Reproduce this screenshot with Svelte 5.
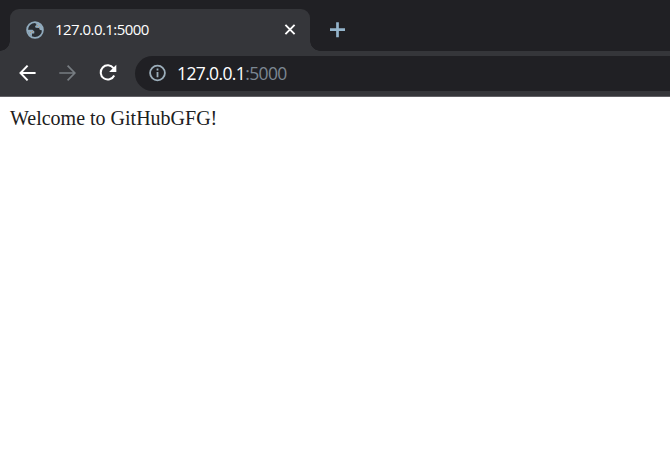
<script>
  const host = '127.0.0.1';
  const port = ':5000';
</script>

<div class="browser">
  <header class="tabs">
    <div class="tab">
      <svg class="globe" width="20" height="20" viewBox="0 0 20 20">
        <circle cx="10" cy="10" r="7.9" fill="#292d32" stroke="#91abbd" stroke-width="1.8" />
        <path d="M10.2 3.2 L14 3 L17 7 L17 10.6 L14.7 9.8 L14.1 7.9 L10.6 7.8 L10 5.9 L11.7 5 Z" fill="#91abbd" />
        <path d="M2.4 9.8 L7.5 9.8 L9.4 11.5 L9.2 13.4 L7.1 13.6 L6.8 16.6 L3.8 14.4 Z" fill="#91abbd" />
        <path d="M12 5h1v1h-1zM14 7h1v1h-1zM5 12h1v1H5zM7 11h1v1H7z" fill="#b69370" />
      </svg>
      <span class="title">{host}{port}</span>
      <svg class="close" width="12" height="12" viewBox="0 0 12 12">
        <path d="M1.4 .9 L10.6 10.1 M10.6 .9 L1.4 10.1" stroke="#fff" stroke-width="1.9" />
      </svg>
    </div>
    <svg class="plus" width="16" height="16" viewBox="0 0 16 16">
      <path d="M8.5 .2v15M1 7.7h15" stroke="#94b4cb" stroke-width="2.7" />
    </svg>
  </header>
  <nav>
    <svg width="18" height="18" viewBox="0 0 18 18" fill="none" stroke="#fff" stroke-width="2">
      <path d="M16.6 9H2M8.6 1.6 L1.5 9 L8.6 16.4" />
    </svg>
    <svg width="18" height="18" viewBox="0 0 18 18" fill="none" stroke="#777d82" stroke-width="1.7">
      <path d="M.3 9h15M8.6 1.6 L15.8 9 L8.6 16.4" />
    </svg>
    <svg width="18" height="18" viewBox="0 0 18 18">
      <path d="M14.5 4.2 A7.1 7.1 0 1 0 15.2 11.5" fill="none" stroke="#fff" stroke-width="2" />
      <path d="M17.3 .7v7.2h-7.2z" fill="#fff" />
    </svg>
    <div class="address">
      <svg width="18" height="18" viewBox="0 0 18 18">
        <circle cx="8.5" cy="9" r="7.4" fill="none" stroke="#9caebb" stroke-width="1.8" />
        <path d="M8.5 4.6v1.9M8.5 8v5.2" stroke="#9caebb" stroke-width="1.8" />
      </svg>
      <span class="url">{host}<span class="port">{port}</span></span>
    </div>
  </nav>
  <main>Welcome to GitHubGFG!</main>
</div>

<style>
  :global(body) { margin: 0; background: #fff; }
  .browser { height: 457px; overflow: hidden; }
  svg { display: block; flex: none; }
  .tabs {
    display: flex;
    height: 51px;
    box-sizing: border-box;
    padding: 9px 0 0 10px;
    background: #202024;
  }
  .tab {
    position: relative;
    display: flex;
    align-items: center;
    width: 300px;
    height: 42px;
    box-sizing: border-box;
    padding: 0 14px 0 15px;
    border-radius: 9px 9px 0 0;
    background: #35363a;
  }
  .tab::before, .tab::after {
    content: '';
    position: absolute;
    bottom: 0;
    width: 10px;
    height: 10px;
  }
  .tab::before { left: -10px; background: radial-gradient(circle at 0 0, #202024 9.5px, #35363a 10px); }
  .tab::after { right: -10px; background: radial-gradient(circle at 100% 0, #202024 9.5px, #35363a 10px); }
  .title {
    flex: 1;
    margin-left: 10px;
    padding-bottom: 2px;
    color: #fff;
    font: 15px/20px "Open Sans", sans-serif;
    letter-spacing: -0.55px;
  }
  .plus { margin: 13px 0 0 19px; }
  nav {
    display: flex;
    align-items: center;
    gap: 22px;
    height: 46px;
    box-sizing: border-box;
    padding: 0 0 1px 19px;
    border-bottom: 1px solid #626166;
    background: #35363a;
  }
  .address {
    display: flex;
    align-items: center;
    flex: 1;
    height: 35px;
    box-sizing: border-box;
    margin-left: -4px;
    padding-left: 14px;
    border-radius: 18px 0 0 18px;
    background: #202024;
  }
  .url {
    margin-left: 10px;
    color: #fff;
    font: 17.5px/24px "Open Sans", sans-serif;
    letter-spacing: -0.63px;
  }
  .port { color: #7c8792; }
  main {
    padding: 9px 10px;
    color: #202020;
    font: 20px/24px "Liberation Serif", serif;
  }
</style>
